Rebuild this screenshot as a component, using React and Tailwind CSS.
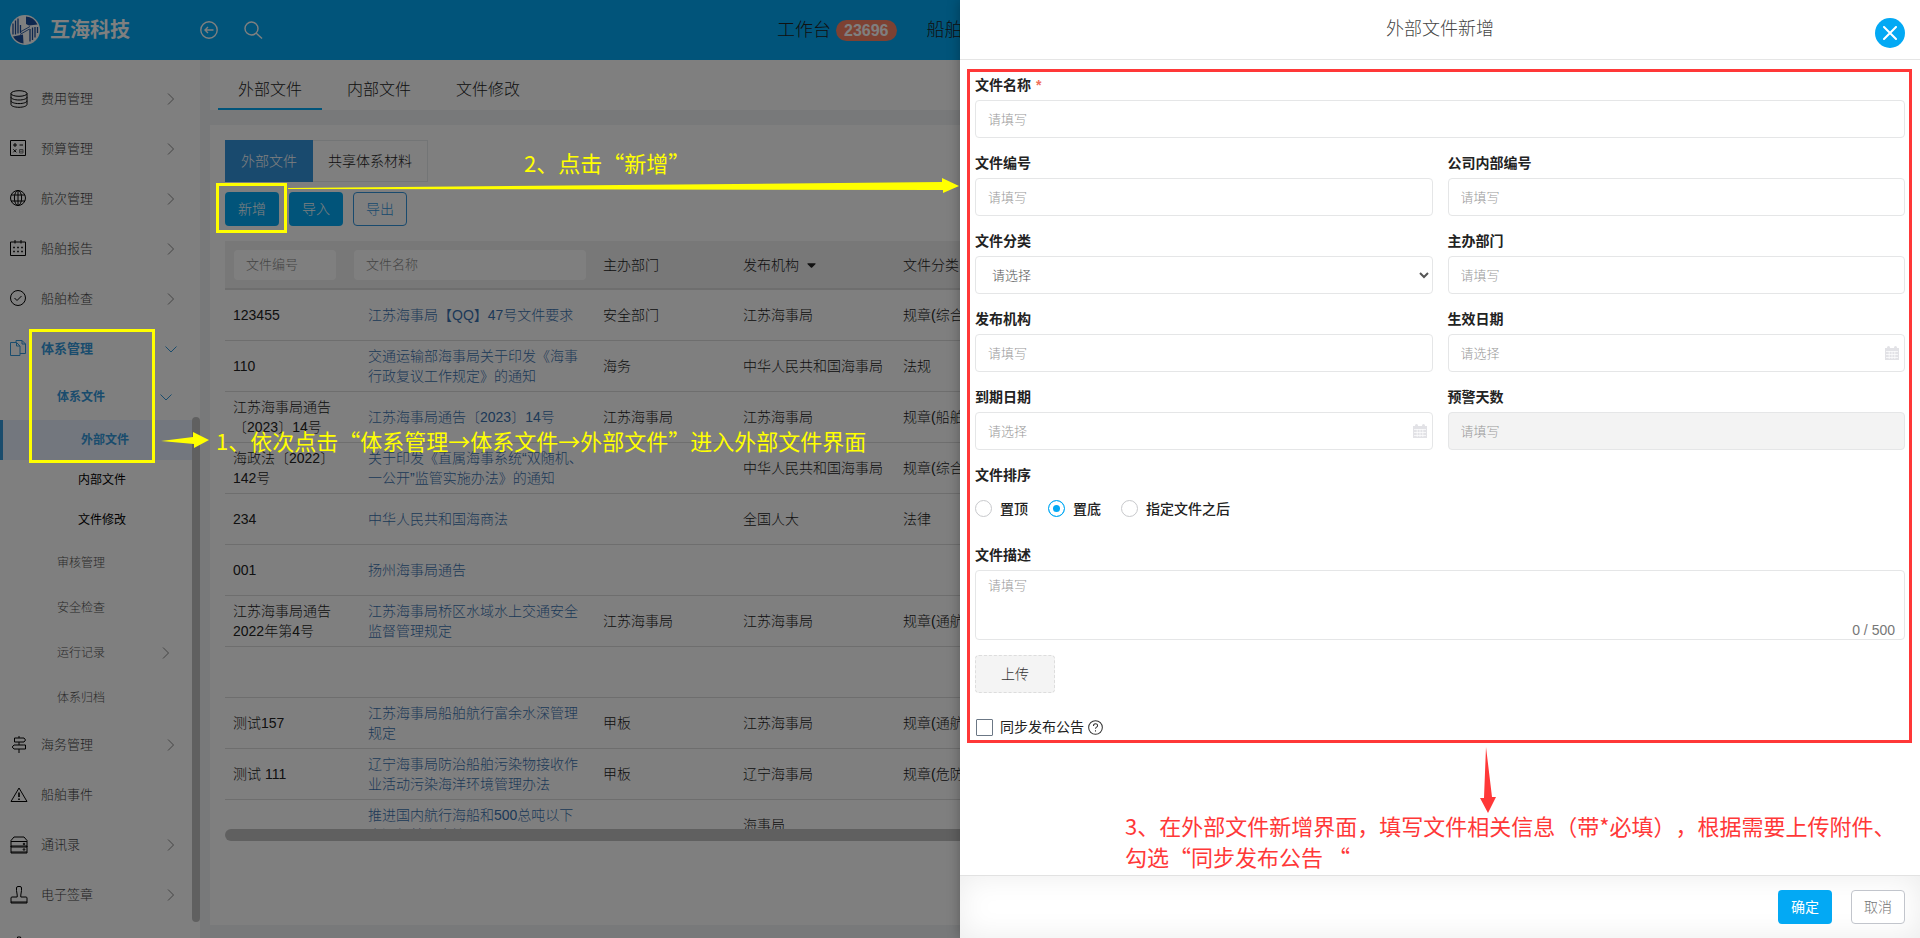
import React, { useState } from "react";
import { FaCaretDown } from "react-icons/fa";

const Chevron = ({ open = false, className = "" }) => (
  <svg
    viewBox="0 0 12 12"
    className={`h-3 w-3 fill-none ${className}`}
    strokeWidth="1"
    stroke="currentColor"
  >
    {open ? <path d="M0.5 3.5 6 9l5.500-5.500" /> : <path d="M3 0.500 8.500 6 3 11.500" />}
  </svg>
);

const icons = {
  cost: (
    <>
      <ellipse cx="9" cy="3.500" rx="8" ry="2.800" />
      <path d="M1 3.500v11c0 1.500 3.500 2.800 8 2.800s8-1.300 8-2.800v-11" />
      <path d="M1 7.200C1 8.700 4.500 10 9 10s8-1.300 8-2.800M1 10.800c0 1.500 3.500 2.800 8 2.800s8-1.300 8-2.800" />
    </>
  ),
  budget: (
    <>
      <path d="M0.500 0.500h15v15h-15z" />
      <path d="M3 5h4M5 3v4M9.500 5h3.500M3.300 9.300l3 3M6.300 9.300l-3 3" />
      <path stroke="#777" d="M9.500 9.500h3.500v3.500H9.500zM9.500 11.200h3.500" />
    </>
  ),
  voyage: (
    <>
      <circle cx="8" cy="8" r="7.500" />
      <ellipse cx="8" cy="8" rx="3.600" ry="7.500" />
      <path d="M8 0.500v15M1 5h14M1 11h14" />
    </>
  ),
  report: (
    <>
      <path d="M0.500 2h15v13.500h-15zM5 0v3.500M11 0v3.500" />
      <path
        strokeWidth="1.600"
        d="M3.200 7.500h1.600M7.200 7.500h1.600M11.200 7.500h1.600M3.200 11.500h1.600M7.200 11.500h1.600M11.200 11.500h1.600"
      />
    </>
  ),
  check: (
    <>
      <circle cx="8" cy="8" r="7.500" />
      <path d="M4.500 8 7 10.500 11.500 6" />
    </>
  ),
  system: (
    <>
      <path d="M0.500 2.500h6L10 6v9.500H0.500zM6.500 2.500V6H10" />
      <path d="M6 2V0.500h6L15.500 4v9.500H10M12 0.500V4h3.500" />
    </>
  ),
  marine: (
    <>
      <path d="M9 0v2M9 6v3M9 13v4" />
      <path d="M4.500 2H14l1.500 2L14 6H4.500zM13.500 9H4L2.200 11 4 13h11.500V9z" />
    </>
  ),
  event: (
    <>
      <path d="M9 2 17 15.500H1z" />
      <path strokeWidth="1.600" d="M9 6.500v4.500M9 12.500v1.600" />
    </>
  ),
  contacts: (
    <>
      <path d="M4 1h10l3 3.500V17H1V4.500zM1 5.500h16M1 10h16v1H1zM1 16h16" />
      <circle cx="14" cy="8" r="0.800" />
      <circle cx="14" cy="13.500" r="0.800" />
    </>
  ),
  stamp: (
    <>
      <path d="M6.500 2q0-1.500 1.500-1.500h2q1.500 0 1.500 1.500v2.500L10.800 9v2H16q1 0 1 1v5H1v-5q0-1 1-1h5.200V9L6.500 4.500z" />
      <path d="M1 16h16" />
    </>
  ),
  settings: (
    <>
      <path d="M7.500 1h3l.5 2 2 .8 1.800-1 2 2-1 1.900.7 2 2 .5v3H1v-3l1.500-.5.8-2-1-1.900 2-2 1.700 1 1.500-.8z" />
      <circle cx="9" cy="9" r="3" />
    </>
  ),
};

const NavIcon = ({ name }) => (
  <svg
    viewBox="0 0 18 18"
    className="h-[18px] w-[18px] shrink-0 fill-none"
    stroke="currentColor"
    strokeWidth="1"
  >
    {icons[name]}
  </svg>
);

const menuTop = [
  { icon: "cost", label: "费用管理" },
  { icon: "budget", label: "预算管理" },
  { icon: "voyage", label: "航次管理" },
  { icon: "report", label: "船舶报告" },
  { icon: "check", label: "船舶检查" },
  { icon: "system", label: "体系管理", open: true },
];

const menuBottom = [
  { icon: "marine", label: "海务管理" },
  { icon: "event", label: "船舶事件", leaf: true },
  { icon: "contacts", label: "通讯录" },
  { icon: "stamp", label: "电子签章" },
  { icon: "settings", label: "系统设置" },
];

const rows = [
  ["123455", "江苏海事局【QQ】47号文件要求", "安全部门", "江苏海事局", "规章(综合)"],
  ["110", "交通运输部海事局关于印发《海事行政复议工作规定》的通知", "海务", "中华人民共和国海事局", "法规"],
  ["江苏海事局通告〔2023〕14号", "江苏海事局通告〔2023〕14号", "江苏海事局", "江苏海事局", "规章(船舶)"],
  ["海政法〔2022〕142号", "关于印发《直属海事系统“双随机、一公开”监管实施办法》的通知", "", "中华人民共和国海事局", "规章(综合)"],
  ["234", "中华人民共和国海商法", "", "全国人大", "法律"],
  ["001", "扬州海事局通告", "", "", ""],
  ["江苏海事局通告2022年第4号", "江苏海事局桥区水域水上交通安全监督管理规定", "江苏海事局", "江苏海事局", "规章(通航)"],
  ["", "", "", "", ""],
  ["测试157", "江苏海事局船舶航行富余水深管理规定", "甲板", "江苏海事局", "规章(通航)"],
  ["测试 111", "辽宁海事局防治船舶污染物接收作业活动污染海洋环境管理办法", "甲板", "辽宁海事局", "规章(危防)"],
  ["", "推进国内航行海船和500总吨以下内河船舶安全管理", "", "海事局", ""],
];

const MenuItem = ({ item }) => (
  <a
    href="#"
    className={`flex h-[50px] items-center pl-[10px] pr-[15px] ${
      item.open ? "font-bold text-[#3498db]" : "text-black"
    }`}
  >
    <NavIcon name={item.icon} />
    <span
      className={`ml-[13px] flex-1 text-[13px] ${
        item.open ? "" : "font-light text-[#444]"
      }`}
    >
      {item.label}
    </span>
    {!item.leaf && (
      <Chevron open={item.open} className={item.open ? "" : "text-[#888]"} />
    )}
  </a>
);

const Header = () => (
  <header className="flex h-[60px] shrink-0 items-center bg-[#03a9f4] pl-[10px] text-white">
    <svg viewBox="0 0 30 30" className="h-[30px] w-[30px]">
      <circle cx="15" cy="15" r="15" fill="#fff" />
      <path
        d="M16 1.500A14 14 0 0 1 27.500 9.500L19 10.500 16 9zM3 21.500 13 19.500 13.500 28.500A14 14 0 0 1 3 21.500z"
        fill="#1d4f9c"
      />
      <path
        d="M3 8.500v11M5.500 5.500v14M8 3.500v15M10.500 10v8M20 14v12.500M22.500 12.500V25M25 12v10.500M27.500 12v6"
        stroke="#1d4f9c"
        strokeWidth="1.300"
      />
      <path
        d="M11 16.500 20 11.500M10 19.500 19.500 14"
        stroke="#1d4f9c"
        strokeWidth="0.900"
      />
    </svg>
    <span className="ml-[10px] text-xl font-bold">互海科技</span>
    <button className="ml-[70px]" aria-label="返回">
      <svg
        viewBox="0 0 18 18"
        className="h-[18px] w-[18px] fill-none"
        stroke="currentColor"
        strokeWidth="1.400"
      >
        <circle cx="9" cy="9" r="8.200" />
        <path d="M13.500 9H5M8 6 5 9l3 3" />
      </svg>
    </button>
    <button className="ml-[26px]" aria-label="搜索">
      <svg
        viewBox="0 0 19 18"
        className="h-[18px] w-[19px] fill-none"
        stroke="currentColor"
        strokeWidth="1.400"
      >
        <circle cx="7.500" cy="7.500" r="6.500" />
        <path d="m12 12 6 5.500" />
      </svg>
    </button>
    <nav className="ml-[514px] flex items-center text-lg font-light text-[#222]">
      <a href="#">工作台</a>
      <span className="ml-[5px] rounded-full bg-[#fa8264] px-2 text-base leading-[21px] font-bold text-white">
        23696
      </span>
      <a href="#" className="ml-[30px]">
        船舶
      </a>
    </nav>
  </header>
);

const Sidebar = () => (
  <aside className="flex w-[200px] shrink-0 overflow-hidden bg-white">
    <nav className="w-[192px] pt-[14px]">
      {menuTop.map((item) => (
        <MenuItem key={item.label} item={item} />
      ))}
      <div className="text-xs">
        <a
          href="#"
          className="flex h-[46px] items-center justify-between pr-5 pl-[57px] font-bold text-[#3498db]"
        >
          体系文件
          <Chevron open />
        </a>
        <a
          href="#"
          className="flex h-10 items-center border-l-[3px] border-[#3498db] bg-[#e6effc] pl-[78px] font-bold text-[#3498db]"
        >
          外部文件
        </a>
        <a href="#" className="flex h-10 items-center pl-[78px] text-black">
          内部文件
        </a>
        <a href="#" className="flex h-10 items-center pl-[78px] text-black">
          文件修改
        </a>
        {["审核管理", "安全检查", "运行记录", "体系归档"].map((label) => (
          <a
            key={label}
            href="#"
            className="flex h-[45px] items-center justify-between pr-5 pl-[57px] font-light text-[#555]"
          >
            {label}
            {label === "运行记录" && <Chevron className="text-[#888]" />}
          </a>
        ))}
      </div>
      {menuBottom.map((item) => (
        <MenuItem key={item.label} item={item} />
      ))}
    </nav>
    <div className="mt-[357px] mb-4 w-2 rounded-full bg-[#c1c1c1]"></div>
  </aside>
);

const FileTable = () => (
  <div className="mt-[15px]">
    <div className="h-[588px] overflow-hidden">
      <table className="w-full table-fixed text-left text-sm leading-5 font-light text-[#222]">
        <colgroup>
          <col className="w-[120px]" />
          <col className="w-[250px]" />
          <col className="w-[140px]" />
          <col className="w-[160px]" />
          <col />
        </colgroup>
        <thead className="bg-[#f0f0f0]">
          <tr className="h-12 border-b-2 border-[#ddd]">
            <th className="px-[9px]">
              <input
                aria-label="文件编号"
                placeholder="文件编号"
                className="block h-[30px] w-full rounded bg-white px-3 text-[13px] font-light placeholder:text-[#888]"
              />
            </th>
            <th className="px-[9px]">
              <input
                aria-label="文件名称"
                placeholder="文件名称"
                className="block h-[30px] w-full rounded bg-white px-3 text-[13px] font-light placeholder:text-[#888]"
              />
            </th>
            <th className="px-2 font-light">主办部门</th>
            <th className="px-2 font-light">
              <span className="flex items-center gap-2">
                发布机构
                <FaCaretDown className="h-[14px] w-[9px]" />
              </span>
            </th>
            <th className="px-2 font-light">文件分类</th>
          </tr>
        </thead>
        <tbody>
          {rows.map((row, i) => (
            <tr key={i} className="h-[51px] border-b border-[#dcdcdc]">
              <td className="px-2">{row[0]}</td>
              <td className="pr-2 pl-[23px]">
                <a href="#" className="text-[#3a72b0]">
                  {row[1]}
                </a>
              </td>
              <td className="px-2">{row[2]}</td>
              <td className="px-2 whitespace-nowrap">{row[3]}</td>
              <td className="px-2 whitespace-nowrap">{row[4]}</td>
            </tr>
          ))}
        </tbody>
      </table>
    </div>
    <div className="h-3 rounded-l-full bg-[#c1c1c1]"></div>
  </div>
);

const CalendarIcon = () => (
  <svg
    viewBox="0 0 14 14"
    className="absolute top-3 right-[6px] h-[14px] w-[14px]"
    fill="#e2e2e6"
  >
    <path d="M0 2h14v12H0z" />
    <rect x="2" width="3" height="4" rx="1.500" />
    <rect x="9" width="3" height="4" rx="1.500" />
    <path
      d="M1 5.500h12M1 8.500h12M1 11.500h12M4.200 5v8M7 5v8M9.800 5v8"
      stroke="#fff"
      strokeWidth="0.700"
    />
  </svg>
);

const Field = ({ id, label, required, date, disabled, placeholder = "请填写", wide }) => (
  <div className={wide ? "col-span-2" : ""}>
    <label htmlFor={id} className="mb-[5px] block leading-5 font-bold">
      {label}
      {required && <span className="ml-[5px] text-[#f0705a]">*</span>}
    </label>
    <div className="relative">
      <input
        id={id}
        disabled={disabled}
        placeholder={placeholder}
        className="block h-[38px] w-full rounded border border-[#e5e6e7] bg-white px-3 text-[13px] font-light placeholder:text-[#999] disabled:bg-[#f3f3f3]"
      />
      {date && <CalendarIcon />}
    </div>
  </div>
);

const Drawer = () => {
  const [order, setOrder] = useState("置底");
  const [desc, setDesc] = useState("");

  return (
    <section className="absolute inset-y-0 right-0 flex w-1/2 flex-col bg-white shadow-[0_0_12px_rgba(0,0,0,0.3)]">
      <div className="relative h-[60px] shrink-0 border-b border-[#e5e5e5]">
        <h2 className="text-center text-lg leading-[58px] font-light text-[#444]">
          外部文件新增
        </h2>
        <button
          aria-label="关闭"
          className="absolute top-[18px] right-[15px] flex h-[30px] w-[30px] items-center justify-center rounded-full bg-[#03a9f4]"
        >
          <svg
            viewBox="0 0 14 14"
            className="h-[14px] w-[14px]"
            stroke="#fff"
            strokeWidth="2"
            strokeLinecap="round"
          >
            <path d="m1 1 12 12M13 1 1 13" />
          </svg>
        </button>
      </div>

      <div className="flex-1 overflow-hidden">
        <form className="relative px-[15px] pt-[15px] text-sm text-[#222]">
          <div className="pointer-events-none absolute top-[9px] right-2 -bottom-[7px] left-[7px] border-[3px] border-[#ff3838]"></div>
          <div className="grid grid-cols-2 gap-[15px]">
            <Field id="name" label="文件名称" required wide />
            <Field id="code" label="文件编号" />
            <Field id="innerCode" label="公司内部编号" />
            <div>
              <label htmlFor="category" className="mb-[5px] block leading-5 font-bold">
                文件分类
              </label>
              <select
                id="category"
                className="block h-[38px] w-full rounded border border-[#e5e6e7] bg-white px-3 text-[13px] font-light text-[#555]"
              >
                <option>请选择</option>
              </select>
            </div>
            <Field id="dept" label="主办部门" />
            <Field id="org" label="发布机构" />
            <Field id="startDate" label="生效日期" placeholder="请选择" date />
            <Field id="endDate" label="到期日期" placeholder="请选择" date />
            <Field id="warnDays" label="预警天数" disabled />
          </div>

          <fieldset className="mt-[15px]">
            <legend className="leading-5 font-bold">文件排序</legend>
            <div className="flex h-[45px] items-center gap-5 pt-[2px]">
              {["置顶", "置底", "指定文件之后"].map((item) => (
                <label key={item} className="flex items-center gap-2 font-medium">
                  <input
                    type="radio"
                    name="order"
                    checked={order === item}
                    onChange={() => setOrder(item)}
                    className="h-[17px] w-[17px] appearance-none rounded-full border border-[#c8c9cc] checked:border-[#03a9f4] checked:bg-[#03a9f4] checked:shadow-[inset_0_0_0_4px_#fff]"
                  />
                  {item}
                </label>
              ))}
            </div>
          </fieldset>

          <div className="relative mt-[15px]">
            <label htmlFor="desc" className="mb-[5px] block leading-5 font-bold">
              文件描述
            </label>
            <textarea
              id="desc"
              value={desc}
              onChange={(e) => setDesc(e.target.value)}
              placeholder="请填写"
              className="block h-[70px] w-full resize-none rounded border border-[#e5e6e7] px-3 py-[6px] text-[13px] font-light placeholder:text-[#999]"
            />
            <span className="absolute right-[10px] bottom-0 leading-5 text-[#777]">
              {desc.length} / 500
            </span>
          </div>

          <button
            type="button"
            className="mt-[15px] block h-[38px] w-20 rounded border border-dashed border-[#ddd] bg-[#f4f4f4] font-light text-[#333]"
          >
            上传
          </button>

          <div className="mt-[25px] flex items-center">
            <label className="flex items-center gap-[7px] leading-[18px]">
              <input
                type="checkbox"
                className="ml-px h-[17px] w-[17px] appearance-none rounded-[1px] border border-[#6b7785] checked:bg-[#03a9f4]"
              />
              同步发布公告
            </label>
            <svg
              viewBox="0 0 16 16"
              className="ml-1 h-[15px] w-[15px] fill-none"
              stroke="#333"
              strokeWidth="1.100"
            >
              <circle cx="8" cy="8" r="7.300" />
              <path d="M5.800 6.300c0-3 4.400-3 4.400-.3 0 1.600-2.200 1.600-2.200 3.300M8 10.800v1.400" />
            </svg>
          </div>
        </form>
      </div>

      <div className="flex h-[63px] shrink-0 items-center justify-end gap-[19px] border-t border-[#e2e2e2] px-[15px] text-sm shadow-[inset_0_0_30px_rgba(0,0,0,0.08)]">
        <button className="h-[34px] w-[54px] rounded bg-[#03a9f4] text-white">
          确定
        </button>
        <button className="h-[34px] w-[54px] rounded border border-[#c2c5cc] bg-white font-light text-[#777]">
          取消
        </button>
      </div>
    </section>
  );
};

// Step-by-step hints drawn over the page
const Guide = () => (
  <div className="pointer-events-none absolute inset-0 font-['Noto_Sans_CJK_SC',sans-serif] text-[22px] leading-[31px] whitespace-nowrap text-[#ffff00] [text-spacing-trim:space-all]">
    <div className="absolute top-[329px] left-[29px] h-[134px] w-[126px] border-[3px] border-[#ffff00]"></div>
    <div className="absolute top-[183px] left-[216px] h-[50px] w-[71px] border-[3px] border-[#ffff00]"></div>
    <p className="absolute top-[425px] left-[216px]">
      1、依次点击“体系管理→体系文件→外部文件”进入外部文件界面
    </p>
    <p className="absolute top-[147px] left-[524px]">2、点击“新增”</p>
    <p className="absolute top-[810px] left-[1125px] text-[#ff3838]">
      3、在外部文件新增界面，填写文件相关信息（带*必填），根据需要上传附件、
      <br />
      勾选“同步发布公告 “
    </p>
    <svg className="absolute inset-0 h-full w-full">
      <path
        fill="#ffff00"
        d="M288 188 942 182v-4l17 8-16 7v-3l-655-1zM161 441l32-4v-5l16 8-15 8v-4z"
      />
      <path fill="#ff3838" d="M1486 747l6 50h4l-8 16-8-15h4z" />
    </svg>
  </div>
);

export default function App() {
  return (
    <div className="relative flex h-screen flex-col overflow-hidden font-['Liberation_Sans','Noto_Sans_CJK_SC',sans-serif]">
      <Header />
      <div className="flex min-h-0 flex-1 bg-[#f0f2f5]">
        <Sidebar />
        <main className="ml-[10px] flex min-w-0 flex-1 flex-col">
          <div className="flex h-[50px] shrink-0 gap-[5px] bg-white pl-2 font-light text-[#222]">
            <a href="#" className="border-b-2 border-[#03a9f4] px-5 leading-[60px]">
              外部文件
            </a>
            <a href="#" className="px-5 leading-[60px]">
              内部文件
            </a>
            <a href="#" className="px-5 leading-[60px]">
              文件修改
            </a>
          </div>
          <div className="mt-[15px] mb-[13px] flex-1 overflow-hidden bg-white pt-[15px] pl-[15px] text-sm font-light">
            <div className="flex h-[42px]">
              <button className="bg-[#3294dc] px-4 text-white">外部文件</button>
              <button className="border border-l-0 border-[#e7eaec] px-[15px] text-[#222]">
                共享体系材料
              </button>
            </div>
            <div className="mt-[10px] flex gap-[10px]">
              <button className="h-[34px] w-[54px] rounded bg-[#03a9f4] text-white">
                新增
              </button>
              <button className="h-[34px] w-[54px] rounded bg-[#03a9f4] text-white">
                导入
              </button>
              <button className="h-[34px] w-[54px] rounded border border-[#3294dc] text-[#3294dc]">
                导出
              </button>
            </div>
            <FileTable />
          </div>
        </main>
      </div>
      <div className="absolute inset-0 bg-black/50"></div>
      <Drawer />
      <Guide />
    </div>
  );
}
